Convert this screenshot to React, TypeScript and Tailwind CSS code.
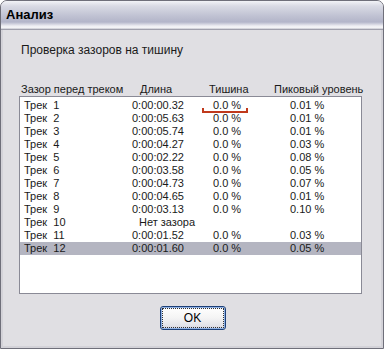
import React from "react";

const rows: [string, string, string, string][] = [
  ["Трек  1", "0:00:00.32", "0.0 %", "0.01 %"],
  ["Трек  2", "0:00:05.63", "0.0 %", "0.01 %"],
  ["Трек  3", "0:00:05.74", "0.0 %", "0.01 %"],
  ["Трек  4", "0:00:04.27", "0.0 %", "0.03 %"],
  ["Трек  5", "0:00:02.22", "0.0 %", "0.08 %"],
  ["Трек  6", "0:00:03.58", "0.0 %", "0.05 %"],
  ["Трек  7", "0:00:04.73", "0.0 %", "0.07 %"],
  ["Трек  8", "0:00:04.65", "0.0 %", "0.01 %"],
  ["Трек  9", "0:00:03.13", "0.0 %", "0.10 %"],
  ["Трек  10", "", "", ""],
  ["Трек  11", "0:00:01.52", "0.0 %", "0.03 %"],
  ["Трек  12", "0:00:01.60", "0.0 %", "0.05 %"],
];

function Row({ r, i }: { r: [string, string, string, string]; i: number }) {
  return (
    <div
      className={`h-[13px] leading-[13px] shrink-0 grid grid-cols-[108px_81px_77px_1fr] pl-[4px] whitespace-pre text-[11px] ${
        i === 11 ? "bg-[#b4b5c1]" : ""
      }`}
    >
      <span>{r[0]}</span>
      {r[1] === "" ? (
        <span className="col-span-3 pl-[7px]">Нет зазора</span>
      ) : (
        <>
          <span>{r[1]}</span>
          <span className="relative">
            {r[2]}
            {i === 0 && (
              <span className="absolute left-[-11px] top-[9px] w-[46px] h-[5px] border-l-[2px] border-r-[2px] border-b-[2px] border-[#c0391c]" />
            )}
          </span>
          <span>{r[3]}</span>
        </>
      )}
    </div>
  );
}

export default function App() {
  return (
    <div
      className="w-[384px] h-[349px] bg-[#e0dfe3] text-[12px] text-[#1a1a1a] rounded-t-[7px] border border-[#6f6f7a] flex flex-col overflow-hidden"
      style={{ fontFamily: '"Liberation Sans", Arial, sans-serif' }}
    >
      <div className="h-[29px] shrink-0 flex items-center pl-[5px] bg-[linear-gradient(to_bottom,#f2f3f7_0%,#d9dae4_18%,#bfc1d2_55%,#b3b5c9_75%,#e9e9ef_88%,#f8f8fa_94%,#c7c7d0_100%)] border-b border-[#a0a0ac]">
        <span className="font-bold text-[13px] text-black">Анализ</span>
      </div>
      <div className="flex-1 flex flex-col pl-[16px] pr-[19px] border-l-[2px] border-r-[2px] border-b-[2px] border-[#d3d2d8]">
        <div className="mt-[13px] h-[14px] leading-[14px] pl-[2px]">Проверка зазоров на тишину</div>
        <div className="mt-[25px] h-[14px] leading-[14px] grid grid-cols-[119px_69px_65px_1fr] pl-[2px] whitespace-nowrap text-[11px]">
          <span>Зазор перед треком</span>
          <span>Длина</span>
          <span>Тишина</span>
          <span>Пиковый уровень</span>
        </div>
        <div className="h-[198px] bg-white border border-[#8a8a96] pt-[2px] flex flex-col">
          {rows.map((r, i) => (
            <Row key={i} r={r} i={i} />
          ))}
        </div>
        <div className="flex justify-center mt-[12px] pl-[4px]">
          <button className="w-[66px] h-[24px] rounded-[3px] border border-[#1c3f78] bg-[linear-gradient(to_bottom,#ffffff_0%,#f4f4f4_50%,#e2e2e8_85%,#cfd0dc_100%)] p-[1px] shadow-[inset_0_0_0_1px_#8fb1e4]">
            <div className="w-full h-full border border-dotted border-[#333] flex items-center justify-center text-[12px] text-black">
              OK
            </div>
          </button>
        </div>
      </div>
    </div>
  );
}
